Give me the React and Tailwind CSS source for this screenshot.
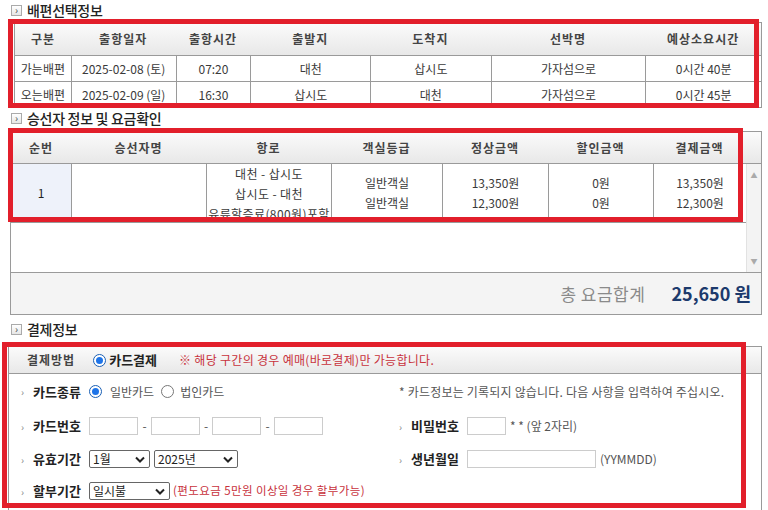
import React from 'react';

const t1Widths = ['w-[56px]', 'w-[105px]', 'w-[75px]', 'w-[120px]', 'w-[121px]', 'w-[155px]', 'w-[116px]'];
const t1Head = ['구분', '출항일자', '출항시간', '출발지', '도착지', '선박명', '예상소요시간'];
const t1Rows = [
  ['가는배편', '2025-02-08 (토)', '07:20', '대천', '삽시도', '가자섬으로', '0시간 40분'],
  ['오는배편', '2025-02-09 (일)', '16:30', '삽시도', '대천', '가자섬으로', '0시간 45분'],
];

const t2Widths = ['w-[60px]', 'w-[135px]', 'w-[125px]', 'w-[111px]', 'w-[106px]', 'w-[105px]', 'w-[93px]'];
const t2Head = ['순번', '승선자명', '항로', '객실등급', '정상금액', '할인금액', '결제금액'];

function SectionTitle({ children }) {
  return (
    <div className="flex items-center h-[20px] pl-[11px] gap-[5px]">
      <span className="flex items-center justify-center w-[11px] h-[11px] border border-[#aaa] bg-gradient-to-b from-white to-[#e6e6e6] text-[10px] leading-none text-[#444]">
        ›
      </span>
      <span className="text-[14px] font-medium text-[#222] tracking-[-0.3px]">{children}</span>
    </div>
  );
}

function Radio({ checked }) {
  return (
    <span
      className={
        checked
          ? 'flex items-center justify-center w-[13px] h-[13px] rounded-full border border-[#1a5fb4] bg-white'
          : 'flex items-center justify-center w-[13px] h-[13px] rounded-full border border-[#777] bg-white'
      }
    >
      {checked && <span className="w-[7px] h-[7px] rounded-full bg-[#1e74e8]" />}
    </span>
  );
}

function Select({ value, width }) {
  return (
    <div className={`${width} h-[18px] flex items-center justify-between border border-[#666] rounded-[2px] bg-white pl-[3px] pr-[4px] text-[12px] text-[#222]`}>
      <span>{value}</span>
      <svg width="10" height="7" viewBox="0 0 10 7">
        <path d="M1 1.5 L5 5.5 L9 1.5" fill="none" stroke="#222" strokeWidth="2" />
      </svg>
    </div>
  );
}

function Field({ width }) {
  return <span className={`${width} h-[18px] border border-[#ccc] bg-white`} />;
}

function Label({ children }) {
  return (
    <div className="flex items-center">
      <span className="w-[12px] text-[10px] text-[#888]">›</span>
      <span className="w-[56px] text-[13px] font-bold text-[#222]">{children}</span>
    </div>
  );
}

export default function App() {
  return (
    <div className="relative w-[768px] h-[510px] overflow-hidden bg-white text-[#3a3a3a] font-['Noto_Sans_CJK_KR','Malgun_Gothic',sans-serif]">
      <SectionTitle>배편선택정보</SectionTitle>

      <div className="ml-[14px] mt-[2px] w-[748px] border border-[#9a9a9a] text-[12px]">
        <div className="flex h-[32px] bg-gradient-to-b from-[#fbfbfb] to-[#e8e8e8]">
          {t1Head.map((h, i) => (
            <div key={h} className={`${t1Widths[i]} flex items-center justify-center font-bold text-[#444] tracking-[1px]`}>
              {h}
            </div>
          ))}
        </div>
        {t1Rows.map((r, ri) => (
          <div key={ri} className="flex h-[26px] border-t border-[#9a9a9a]">
            {r.map((c, i) => (
              <div key={i} className={`${t1Widths[i]} flex items-center justify-center ${i > 0 ? 'border-l border-[#9a9a9a]' : ''}`}>
                {c}
              </div>
            ))}
          </div>
        ))}
      </div>

      <SectionTitle>승선자 정보 및 요금확인</SectionTitle>

      <div className="ml-[10px] mt-[3px] w-[752px] border border-[#9a9a9a] text-[12px]">
        <div className="flex h-[32px] bg-gradient-to-b from-[#fbfbfb] to-[#e8e8e8] border-b border-[#9a9a9a]">
          {t2Head.map((h, i) => (
            <div key={h} className={`${t2Widths[i]} flex items-center justify-center font-bold text-[#444] tracking-[1px]`}>
              {h}
            </div>
          ))}
        </div>
        <div className="flex h-[108px]">
          <div className="w-[735px]">
            <div className="flex h-[59px] border-b border-[#9a9a9a] leading-[20px]">
              <div className={`${t2Widths[0]} flex items-center justify-center bg-[#eef2fa] text-[#222]`}>1</div>
              <div className={`${t2Widths[1]} border-l border-[#9a9a9a]`} />
              <div className={`${t2Widths[2]} border-l border-[#9a9a9a] flex flex-col items-center overflow-hidden whitespace-nowrap tracking-[0.4px]`}>
                <span>대천 - 삽시도</span>
                <span>삽시도 - 대천</span>
                <span>유류할증료(800원)포함</span>
              </div>
              {[
                ['일반객실', '일반객실'],
                ['13,350원', '12,300원'],
                ['0원', '0원'],
                ['13,350원', '12,300원'],
              ].map((pair, i) => (
                <div key={i} className={`${t2Widths[i + 3]} border-l border-[#9a9a9a] flex flex-col items-center justify-center`}>
                  <span>{pair[0]}</span>
                  <span>{pair[1]}</span>
                </div>
              ))}
            </div>
          </div>
          <div className="flex-1 flex flex-col justify-between items-center bg-[#f3f3f3] border-l border-[#e2e2e2] py-[6px] text-[7px] text-[#aaa]">
            <span>▲</span>
            <span>▼</span>
          </div>
        </div>
        <div className="flex items-center justify-end h-[42px] border-t border-[#9a9a9a] bg-[#f4f4f4] pr-[10px]">
          <span className="text-[17px] text-[#8a8a8a] mr-[26px] tracking-[0.5px]">총 요금합계</span>
          <span className="text-[18px] font-bold text-[#1c3a6c]">25,650 원</span>
        </div>
      </div>

      <div className="mt-[4px]">
        <SectionTitle>결제정보</SectionTitle>
      </div>

      <div className="ml-[8px] mt-[7px] w-[754px] h-[170px] border border-[#9a9a9a] text-[12px]">
        <div className="flex items-center h-[27px] bg-gradient-to-b from-[#fbfbfb] to-[#e8e8e8] border-b border-[#9a9a9a] pl-[18px]">
          <span className="font-bold text-[#444] tracking-[1px]">결제방법</span>
          <span className="ml-[18px]">
            <Radio checked />
          </span>
          <span className="ml-[3px] text-[13px] font-bold text-[#222]">카드결제</span>
          <span className="ml-[22px] text-[#c8323c] tracking-[0.3px]">※ 해당 구간의 경우 예매(바로결제)만 가능합니다.</span>
        </div>

        <div className="flex">
          <div className="w-[388px] pl-[12px]">
            <div className="flex items-center h-[35px]">
              <Label>카드종류</Label>
              <Radio checked />
              <span className="ml-[8px] text-[#555]">일반카드</span>
              <span className="ml-[7px]">
                <Radio />
              </span>
              <span className="ml-[6px] text-[#555]">법인카드</span>
            </div>
            <div className="flex items-center h-[34px]">
              <Label>카드번호</Label>
              <Field width="w-[49px]" />
              <span className="w-[13px] text-center text-[#555]">-</span>
              <Field width="w-[49px]" />
              <span className="w-[12px] text-center text-[#555]">-</span>
              <Field width="w-[49px]" />
              <span className="w-[13px] text-center text-[#555]">-</span>
              <Field width="w-[49px]" />
            </div>
            <div className="flex items-center h-[32px]">
              <Label>유효기간</Label>
              <Select value="1월" width="w-[61px]" />
              <span className="w-[4px]" />
              <Select value="2025년" width="w-[84px]" />
            </div>
            <div className="flex items-center h-[32px]">
              <Label>할부기간</Label>
              <Select value="일시불" width="w-[81px]" />
              <span className="ml-[3px] text-[11.5px] text-[#c8323c] tracking-[0.4px]">(편도요금 5만원 이상일 경우 할부가능)</span>
            </div>
          </div>

          <div className="flex-1 pl-[2px]">
            <div className="flex items-center h-[35px] text-[12px] text-[#555] tracking-[0.2px]">
              * 카드정보는 기록되지 않습니다. 다음 사항을 입력하여 주십시오.
            </div>
            <div className="flex items-center h-[34px]">
              <Label>비밀번호</Label>
              <Field width="w-[39px]" />
              <span className="ml-[4px] text-[12px] text-[#555]">* * (앞 2자리)</span>
            </div>
            <div className="flex items-center h-[32px]">
              <Label>생년월일</Label>
              <Field width="w-[129px]" />
              <span className="ml-[4px] text-[12px] text-[#555]">(YYMMDD)</span>
            </div>
          </div>
        </div>
      </div>

      {/* red annotation boxes */}
      <div className="absolute left-[8px] top-[19px] w-[751px] h-[89px] border-[5px] border-[#e21f2b]" />
      <div className="absolute left-[8px] top-[128px] w-[735px] h-[94px] border-[5px] border-[#e21f2b]" />
      <div className="absolute left-[2px] top-[342px] w-[744px] h-[166px] border-[5px] border-[#e21f2b]" />
    </div>
  );
}
